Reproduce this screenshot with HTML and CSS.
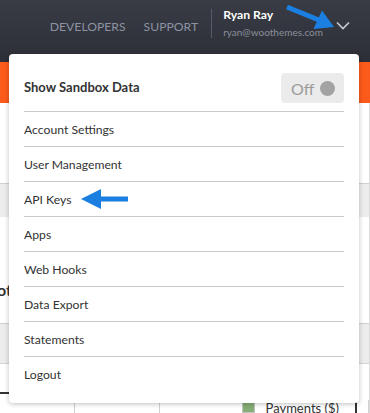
FILE: index.html
```html
<!DOCTYPE html>
<html lang="en">
<head>
    <meta charset="UTF-8">
    <meta name="viewport" content="width=device-width, initial-scale=1.0">
    <title>Account Menu</title>
    <link rel="stylesheet" href="styles.css">
</head>
<body>
    <header class="topbar">
        <nav class="topnav">
            <a href="#">DEVELOPERS</a>
            <a href="#">SUPPORT</a>
        </nav>
        <span class="topbar-divider"></span>
        <div class="user">
            <span class="user-name">Ryan Ray</span>
            <span class="user-email">ryan@woothemes.com</span>
        </div>
        <button class="user-toggle" aria-label="Open account menu">
            <svg width="14" height="9" viewBox="0 0 14 9">
                <polyline points="1,1.5 7,7.5 13,1.5" fill="none" stroke="#c6c9d0" stroke-width="1.7"/>
            </svg>
        </button>
        <!-- annotation arrow pointing at the toggle -->
        <svg class="callout-arrow" width="60" height="35" viewBox="0 0 60 35">
            <line x1="7" y1="7" x2="40" y2="20.5" stroke="#1b7fe2" stroke-width="5"/>
            <polygon points="54,27 33.5,29 42,10.5" fill="#1b7fe2"/>
        </svg>
    </header>
    <div class="subbar"></div>

    <main class="page">
        <div class="page-intro"></div>
        <div class="page-tabs"></div>
        <div class="overview">
            <h2 class="overview-title">Account Snapshot</h2>
        </div>
        <div class="page-filters"></div>
        <div class="chart">
            <div class="chart-axis"></div>
            <div class="chart-foot">
                <span class="chart-col"></span>
                <span class="chart-col chart-col-wide"></span>
                <span class="legend"><span class="legend-swatch"></span>Payments ($)</span>
                <span class="chart-marker"></span>
                <span class="chart-edge"></span>
            </div>
        </div>
    </main>

    <div class="dropdown">
        <div class="sandbox">
            <span class="sandbox-label">Show Sandbox Data</span>
            <span class="switch">Off <span class="switch-knob"></span></span>
        </div>
        <a class="menu-item" href="#">Account Settings</a>
        <a class="menu-item" href="#">User Management</a>
        <a class="menu-item" href="#">API Keys
            <svg class="item-arrow" width="48" height="22" viewBox="0 0 48 22">
                <polygon points="1,11 21,1 21,21" fill="#1b7fe2"/>
                <rect x="20" y="8.5" width="28" height="5" fill="#1b7fe2"/>
            </svg>
        </a>
        <a class="menu-item" href="#">Apps</a>
        <a class="menu-item" href="#">Web Hooks</a>
        <a class="menu-item" href="#">Data Export</a>
        <a class="menu-item" href="#">Statements</a>
        <a class="menu-item" href="#">Logout</a>
    </div>
</body>
</html>
```

FILE: styles.css
```css
body {
    font-family: Lato, 'Open Sans', sans-serif;
    margin: 0;
    padding: 0;
    width: 370px;
    height: 413px;
    overflow: hidden;
    position: relative;
    background-color: #fff;
}

/* top bar */
.topbar {
    position: relative;
    height: 62px;
    box-sizing: border-box;
    padding: 0 20px 16px 0;
    display: flex;
    align-items: center;
    justify-content: flex-end;
    background: linear-gradient(#393c45, #2c2f36);
}

.topnav {
    display: flex;
    gap: 18px;
    margin-right: 13px;
}

.topnav a {
    color: #8c92a2;
    font-size: 12.2px;
    text-decoration: none;
    margin-top: 6px;
}

.topbar-divider {
    width: 1px;
    height: 29px;
    background-color: #575b65;
    margin-right: 11px;
}

.user {
    display: flex;
    flex-direction: column;
}

.user-name {
    color: #fff;
    font-weight: bold;
    font-size: 12.2px;
    line-height: 16px;
}

.user-email {
    color: #8a8f9b;
    font-size: 10px;
    line-height: 14px;
    margin-top: 2px;
}

.user-toggle {
    background: none;
    border: none;
    padding: 0;
    margin: 4px 0 0 13px;
    display: flex;
    cursor: pointer;
}

.callout-arrow {
    position: absolute;
    left: 280px;
    top: 0;
}

.subbar {
    height: 41px;
    background-color: #fc5a1b;
}

/* page behind the menu */
.page {
    border-right: 1px solid #dcdcdc;
}

.page-intro {
    height: 80px;
}

.page-tabs {
    height: 33px;
    background-color: #ececec;
    border-top: 1px solid #cfcfcf;
}

.overview {
    height: 106px;
    overflow: hidden;
}

.overview-title {
    margin: 63px 0 0 -117px;
    font-size: 16px;
    line-height: 20px;
    color: #333;
    white-space: nowrap;
}

.page-filters {
    height: 39px;
    background-color: #ececec;
    border-top: 1px solid #cfcfcf;
    border-bottom: 1px solid #d5d5d5;
}

.chart {
    padding-top: 28px;
}

.chart-axis {
    width: 240px;
    height: 2px;
    background-color: #333;
}

.chart-foot {
    display: flex;
    height: 30px;
    padding-top: 6px;
}

.chart-col {
    width: 74px;
    border-right: 1px solid #d0d0d0;
}

.chart-col-wide {
    width: 84px;
}

.legend {
    display: flex;
    align-items: flex-start;
    margin-left: 82px;
    font-size: 13px;
    line-height: 16px;
    color: #333;
    white-space: nowrap;
}

.legend-swatch {
    width: 11px;
    height: 11px;
    margin-right: 11px;
    background-color: #86ad76;
    border: 1px solid #c4c4c4;
}

.chart-marker {
    width: 2px;
    margin-left: 16px;
    background-color: #333;
}

.chart-edge {
    width: 1px;
    margin-left: 11px;
    background-color: #d0d0d0;
}

/* account dropdown */
.dropdown {
    position: absolute;
    top: 54px;
    left: 9px;
    width: 350px;
    box-sizing: border-box;
    padding: 0 15px 12px;
    background-color: #fff;
    border-radius: 4px;
    box-shadow: 0 1px 5px rgba(0, 0, 0, 0.25);
}

.sandbox {
    display: flex;
    justify-content: space-between;
    align-items: center;
    padding: 19px 0 8px;
}

.sandbox-label {
    font-weight: bold;
    font-size: 13px;
    color: #333;
    margin-top: -3px;
}

.switch {
    width: 63px;
    height: 30px;
    box-sizing: border-box;
    padding: 0 9px 0 10px;
    display: flex;
    align-items: center;
    justify-content: space-between;
    background-color: #ebebeb;
    border-radius: 4px;
    color: #9a9a9a;
    font-size: 16px;
}

.switch-knob {
    width: 15px;
    height: 15px;
    border-radius: 50%;
    background-color: #a3a3a3;
}

.menu-item {
    display: flex;
    align-items: center;
    height: 35px;
    box-sizing: border-box;
    border-top: 1px solid #c9c9c9;
    color: #333;
    font-size: 12.2px;
    text-decoration: none;
}

.item-arrow {
    margin-left: 9px;
}
```
